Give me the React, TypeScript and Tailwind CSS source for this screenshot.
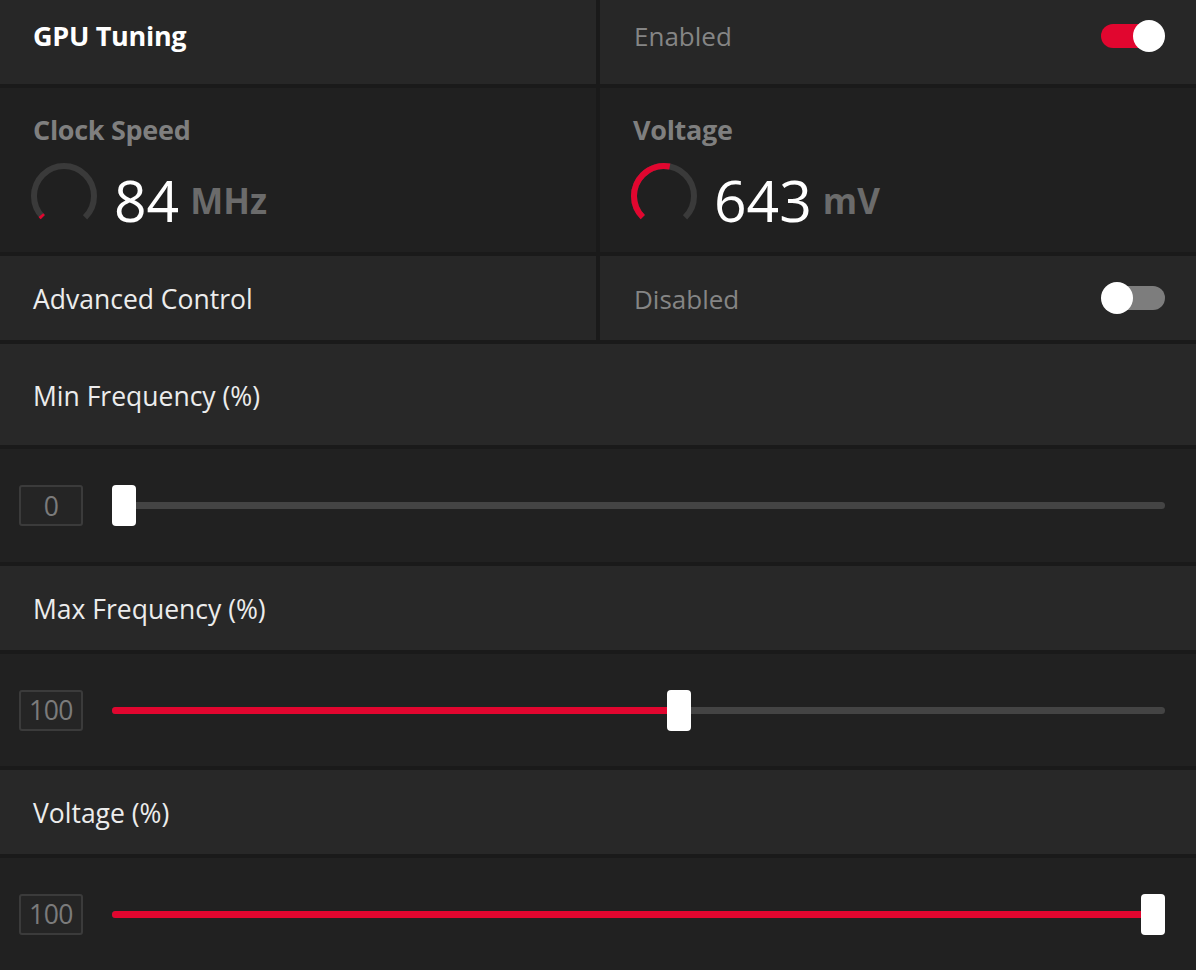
import React from "react";

const RED = "#e1062f";

function Gauge({ frac }: { frac: number }) {
  const r = 30;
  const c = 2 * Math.PI * r;
  const full = c * 0.75;
  const red = full * frac;
  return (
    <svg width="70" height="70" viewBox="0 0 70 70" className="shrink-0">
      <g transform="rotate(135 35 35)">
        <circle cx="35" cy="35" r={r} fill="none" stroke="#3a3a3a" strokeWidth="6" strokeDasharray={`${full} ${c}`} />
        <circle cx="35" cy="35" r={r} fill="none" stroke={RED} strokeWidth="6" strokeDasharray={`${red} ${c}`} />
      </g>
    </svg>
  );
}

function Toggle({ on }: { on: boolean }) {
  return on ? (
    <div className="relative w-[64px] h-[32px] mr-[31px]">
      <div className="absolute left-0 top-[4px] w-[60px] h-[24px] rounded-full" style={{ background: RED }} />
      <div className="absolute right-0 top-0 w-[32px] h-[32px] rounded-full bg-white" />
    </div>
  ) : (
    <div className="relative w-[64px] h-[32px] mr-[31px]">
      <div className="absolute right-0 top-[4px] w-[54px] h-[24px] rounded-full bg-[#7d7d7d]" />
      <div className="absolute left-0 top-0 w-[32px] h-[32px] rounded-full bg-white" />
    </div>
  );
}

function SliderRow({ value, frac, h }: { value: string; frac: number; h: string }) {
  const trackW = 1165 - 112;
  const thumbW = 24;
  const thumbLeft = frac * (trackW - thumbW);
  return (
    <div className={`bg-[#212121] flex items-center ${h}`}>
      <div className="ml-[19px] w-[64px] h-[41px] border-2 border-[#3b3b3b] rounded-[3px] bg-[#252525] flex items-center justify-center pt-[2px] text-[26.5px] text-[#7b7b7b] tracking-[-0.5px]">
        {value}
      </div>
      <div className="relative ml-[29px] w-[1053px] h-[41px]">
        <div className="absolute left-0 right-0 top-[17px] h-[7px] rounded-full bg-[#444444]" />
        {frac > 0 && (
          <div
            className="absolute left-0 top-[17px] h-[7px] rounded-full"
            style={{ width: thumbLeft + 4, background: RED }}
          />
        )}
        <div className="absolute top-0 w-[24px] h-[41px] rounded-[4px] bg-white" style={{ left: thumbLeft }} />
      </div>
    </div>
  );
}

function Metric({ title, frac, value, unit }: { title: string; frac: number; value: string; unit: string }) {
  return (
    <div className="bg-[#202020] pl-[29px] pt-[24px]">
      <div className="pl-[4px] text-[27px] font-bold text-[#7f7f7f] leading-[36px] tracking-[-0.3px]">{title}</div>
      <div className="flex items-center mt-[13px]">
        <Gauge frac={frac} />
        <div className="ml-[15px] mt-[8px] leading-none whitespace-nowrap">
          <span className="text-[57px] text-white">{value}</span>
          <span className="ml-[11px] text-[35px] font-bold text-[#6b6b6b] align-[8px]">{unit}</span>
        </div>
      </div>
    </div>
  );
}

export default function App() {
  return (
    <div
      className="w-[1196px] h-[970px] bg-[#1a1a1a] flex flex-col gap-[4px] overflow-hidden"
      style={{ fontFamily: '"Open Sans", "Noto Sans", sans-serif' }}
    >
      <div className="grid grid-cols-[596px_596px] gap-[4px] h-[84px]">
        <div className="bg-[#272727] flex items-center pb-[12px] pl-[33px] text-[27px] font-bold text-white tracking-[-0.3px]">GPU Tuning</div>
        <div className="bg-[#272727] flex items-center justify-between pb-[12px] pl-[34px]">
          <span className="text-[26px] text-[#858585]">Enabled</span>
          <Toggle on />
        </div>
      </div>
      <div className="grid grid-cols-[596px_596px] gap-[4px] h-[164px]">
        <Metric title="Clock Speed" frac={0.02} value="84" unit="MHz" />
        <Metric title="Voltage" frac={0.54} value="643" unit="mV" />
      </div>
      <div className="grid grid-cols-[596px_596px] gap-[4px] h-[84px]">
        <div className="bg-[#272727] flex items-center pt-[4px] pl-[33px] text-[26.5px] text-[#ececec]">Advanced Control</div>
        <div className="bg-[#272727] flex items-center justify-between pl-[34px]">
          <span className="pt-[2px] text-[26px] text-[#858585]">Disabled</span>
          <Toggle on={false} />
        </div>
      </div>
      <div className="bg-[#282828] h-[101px] flex items-center pt-[4px] pl-[33px] text-[26.5px] text-[#ececec]">Min Frequency (%)</div>
      <SliderRow value="0" frac={0} h="h-[113px]" />
      <div className="bg-[#282828] h-[84px] flex items-center pt-[4px] pl-[33px] text-[26.5px] text-[#ececec]">Max Frequency (%)</div>
      <SliderRow value="100" frac={0.5394} h="h-[112px]" />
      <div className="bg-[#282828] h-[84px] flex items-center pt-[4px] pl-[33px] text-[26.5px] text-[#ececec]">Voltage (%)</div>
      <SliderRow value="100" frac={1} h="h-[112px]" />
    </div>
  );
}
